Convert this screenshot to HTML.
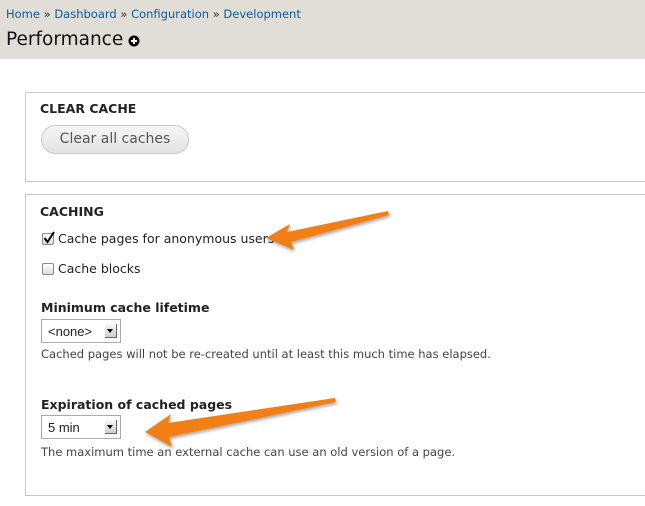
<!DOCTYPE html>
<html><head><style>
*{margin:0;padding:0;box-sizing:border-box}
body{width:645px;height:506px;background:#fff;position:relative;overflow:hidden;font-family:"DejaVu Sans","Liberation Sans",sans-serif;color:#222}
.a{position:absolute;white-space:nowrap}
#hdr{position:absolute;left:0;top:0;width:645px;height:59px;background:#e0ded6}
.bc{left:6px;top:7px;font-size:11.5px;color:#0b5a9b}
.bc span{color:#333}
.t{left:6px;top:29px;font-size:18.5px;color:#111}
.fs{position:absolute;left:25px;width:640px;border:1px solid #c8c8c8}
.h{font-size:12.5px;font-weight:bold;color:#222}
.btn{left:41px;top:125px;width:148px;height:29px;border:1px solid #c8c8c8;border-radius:15px;background:linear-gradient(#f6f6f6,#e2e2e2);font-size:14px;color:#555;text-align:center;line-height:27px}
.lbl{font-size:12.5px;color:#222}
.cb{width:12px;height:12px;border:1px solid #888;border-radius:2px;background:linear-gradient(#fff,#ddd)}
.lab{font-size:12.5px;font-weight:bold;color:#222}
.sel{width:80px;height:24px;border:1px solid #aaa;background:#fff;font-family:"Liberation Sans",sans-serif;font-size:13px;padding:4px 0 0 6px}
.sel i{position:absolute;right:3px;top:4px;width:12px;height:14px;background:linear-gradient(#fafafa,#ccc);border-right:1px solid #666;border-bottom:1px solid #666}
.sel i:after{content:"";position:absolute;left:2px;top:5px;border-left:3.5px solid transparent;border-right:3.5px solid transparent;border-top:4px solid #000}
.d{font-size:11.5px;color:#444}
</style></head><body>
<div id="hdr"></div>
<div class="a bc">Home <span>»</span> Dashboard <span>»</span> Configuration <span>»</span> Development</div>
<div class="a t">Performance</div>
<svg class="a" style="left:128px;top:35px" width="12" height="12"><circle cx="6" cy="6" r="5.5" fill="#000"/><path d="M6 3v6M3 6h6" stroke="#fff" stroke-width="2"/></svg>

<div class="fs" style="top:92px;height:90px"></div>
<div class="a h" style="left:40px;top:101px">CLEAR CACHE</div>
<div class="a btn">Clear all caches</div>

<div class="fs" style="top:194px;height:302px"></div>
<div class="a h" style="left:40px;top:204px">CACHING</div>
<div class="a cb" style="left:42px;top:233px"></div>
<svg class="a" style="left:42px;top:230px" width="14" height="15"><path d="M2.5 8l3 4L12 2" stroke="#000" stroke-width="2" fill="none"/></svg>
<div class="a lbl" style="left:58px;top:231px">Cache pages for anonymous users</div>
<div class="a cb" style="left:42px;top:263px"></div>
<div class="a lbl" style="left:58px;top:261px">Cache blocks</div>

<div class="a lab" style="left:41px;top:300px">Minimum cache lifetime</div>
<div class="a sel" style="left:41px;top:319px">&lt;none&gt;<i></i></div>
<div class="a d" style="left:41px;top:347px">Cached pages will not be re-created until at least this much time has elapsed.</div>

<div class="a lab" style="left:41px;top:397px">Expiration of cached pages</div>
<div class="a sel" style="left:41px;top:415px">5 min<i></i></div>
<div class="a d" style="left:41px;top:445px">The maximum time an external cache can use an old version of a page.</div>

<svg class="a" style="left:0;top:0" width="645" height="506">
<defs><filter id="s"><feDropShadow dx="1" dy="2" stdDeviation="1.5" flood-opacity="0.35"/></filter></defs>
<g fill="#f27f15" filter="url(#s)">
<path d="M388 211 L287 232 L290 224 L266 238 L294 250 L291 242 L389 215Z"/>
<path d="M335 398 L168 423 L171 414 L145 432 L172 447 L169 437 L336 402Z"/>
</g></svg>
</body></html>
